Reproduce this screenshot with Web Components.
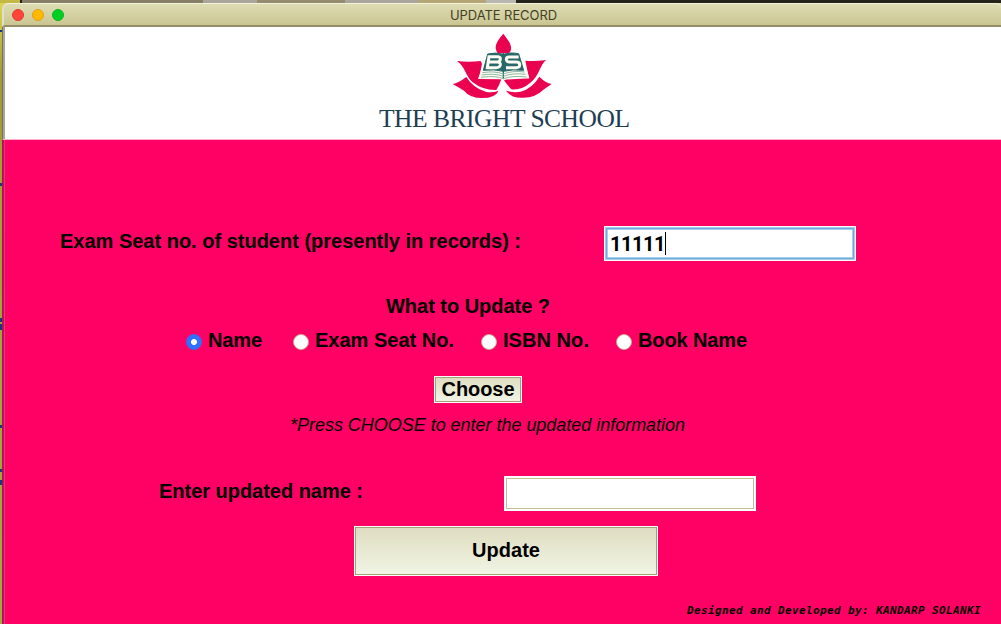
<!DOCTYPE html>
<html lang="en"><head><meta charset="utf-8"><title>UPDATE RECORD</title>
<style>html,body{margin:0;height:100%;overflow:hidden;font-family:"Liberation Sans",Arial,sans-serif;color:#000}</style></head>
<body><record-app></record-app>
<script>
const define = (name, html, ready) => customElements.define(name, class extends HTMLElement {
  connectedCallback() {
    if (this.shadowRoot) return;
    this.attachShadow({mode: 'open'}).innerHTML = html;
    if (ready) ready(this, this.shadowRoot);
  }
});

// Single line of text tracked to a given width
define('fit-text', `<style>:host{display:block;white-space:pre;flex:none}span{display:inline-block}</style><span><slot></slot></span>`, (el, root) => {
  const span = root.querySelector('span'), w = +el.getAttribute('w');
  span.style.letterSpacing = ((w - span.getBoundingClientRect().width) / el.textContent.length) + 'px';
});

define('title-bar', `<style>
:host{display:flex;box-sizing:border-box;height:24px;align-items:center;background:linear-gradient(#dedcb3,#cac693);border-top:1px solid #f3f3dc;border-bottom:2px solid #968e67;border-left:2px solid #e1e0cc;border-radius:6px 5px 0 0;padding-left:8px}
i{width:10px;height:10px;border-radius:50%;margin-right:8px;border:1px solid}
.r{background:#ff4539;border-color:#e5392c}.y{background:#ffb900;border-color:#e1a114}.g{background:#00cf24;border-color:#0fb521}
fit-text{margin-left:378px;font:13px/20px Inter,sans-serif;color:#453f26}
</style><i class="r"></i><i class="y"></i><i class="g"></i><fit-text w="107">UPDATE RECORD</fit-text>`);

define('school-logo', `<style>:host{display:block;width:125px;height:75px}svg{display:block}</style>
<svg width="125" height="75" viewBox="0 0 375 225">
<g fill="#ea0250">
<path d="M190 17C180 29 166 45 167 61Q168 70 174 77H206Q215 69 213 57C211 41 198 29 190 17Z"/>
<path d="M51 99Q86 103 122 99L126 107L117 153L184 154Q178 172 169 186Q129 187 97 162C78 147 75 114 51 99Z"/>
<path d="M318 96Q287 101 256 98L267 151L191 155Q202 171 214 184Q245 187 271 164C298 144 299 112 318 96Z"/>
<path d="M38 168Q55 165 79 147Q100 181 137 191Q154 196 176 188Q166 210 127 210Q89 210 72 188Q58 179 38 168Z"/>
<path d="M335 168Q317 165 298 146Q277 181 242 191Q223 195 198 188Q216 212 250 209Q286 209 310 185Z"/>
</g>
<path d="M130 107L114 153L160 151Q179 150 190 158Q202 149 221 150L268 151L253 99L240 98L232 76H146L136 97Z" fill="#fffef1"/>
<path d="M143 78L130 127Q162 123 190 130Q218 123 251 127L236 77Q207 72 190 79Q168 72 143 78Z" fill="#28676a" stroke="#28676a" stroke-width="3"/>
<path d="M190 75V152" fill="none" stroke="#26676a" stroke-width="4"/>
<path d="M127 134Q164 128 190 138Q218 127 254 132M125 141Q164 135 190 145Q218 134 257 139M123 148Q168 142 190 152Q218 142 260 147" fill="none" stroke="#8db4a6" stroke-width="3"/>
<path d="M147 86H174Q182 87 181 94Q180 101 173 102Q182 103 181 111Q179 119 169 119H142Z M147 102H173" fill="none" stroke="#fffdf3" stroke-width="9"/>
<path d="M236 87H208Q198 87 199 95Q200 102 209 102H228Q239 102 239 110Q240 119 228 119H198" fill="none" stroke="#fffdf3" stroke-width="9"/>
</svg>`);

define('school-header', `<style>:host{display:flex;box-sizing:border-box;height:112px;background:#fff;border-left:2px solid #aaa59b;padding:1px 0 0 374px;flex-direction:column}
school-logo{margin-left:61px}
fit-text{font:25.5px/30px "Liberation Serif",serif;color:#1d3e53;margin-top:1px}</style>
<school-logo></school-logo><fit-text w="250.5">THE BRIGHT SCHOOL</fit-text>`);

define('text-field', `<style>:host{display:block;box-sizing:border-box;width:252px;height:35px;background:#fff;padding:2px;flex:none}
div{box-sizing:border-box;height:31px;border:1px solid #c5bd98;display:flex;align-items:center}
:host([focused]) div{border:1px solid #72a7db;box-shadow:inset 0 0 0 1px #a9cdf1,0 0 0 1px #a9cdf1;padding-left:3px}
i{display:none;width:1px;height:23px;background:#000}:host([focused]) i{display:block}</style><div><slot></slot><i></i></div>`);

define('radio-option', `<style>:host{display:flex;align-items:center;height:24px}
i{box-sizing:border-box;width:16px;height:16px;border-radius:50%;background:#fff;border:1px solid #c6a696;margin:3px 6px 0 0}
:host([checked]) i{background:radial-gradient(circle,#fff 0 2.6px,#306fff 3.3px);border-color:#3c69ed}
</style><i></i><slot></slot>`);

define('push-button', `<style>:host{display:flex;box-sizing:border-box;border:1px solid #fff;flex:none}
div{flex:1;display:flex;align-items:center;justify-content:center;border:1px solid #aaa078;padding-bottom:2px;background:linear-gradient(#dfddc1,#e7e8d1 45%,#f1f4e5)}</style><div><slot></slot></div>`);

define('record-form', `<style>
:host{display:flex;flex-direction:column;align-items:flex-start;height:486px;box-sizing:border-box;background:linear-gradient(90deg,#c90c5c 1px,#f0307a 1px 2px,#ff0064 2px);border-left:1px solid #a01855;border-top:1px solid #ffb2c9;padding-top:86px;font-weight:bold;font-size:20px;line-height:24px}
.row{display:flex;height:35px}.row>fit-text{margin-top:3px}
.value{font-family:Roboto,sans-serif}
.heading{margin:33px 0 0 383px}.radios{display:flex;margin:10px 0 0 183px}
.choose{width:88px;height:27px;margin:24px 0 0 431px}
.note{font:italic 18px/24px "Liberation Sans",sans-serif;margin:10px 0 0 287px}
.second{margin-top:39px}.update{width:304px;height:50px;margin:15px 0 0 351px}
.credit{font:italic bold 11px/20px "DejaVu Sans Mono",monospace;margin:25px 0 0 684px}
</style>
<div class="row"><fit-text w="461" style="margin-left:57px">Exam Seat no. of student (presently in records) :</fit-text><text-field focused style="margin-left:83px"><fit-text class="value" w="55">11111</fit-text></text-field></div>
<fit-text class="heading" w="164">What to Update ?</fit-text>
<div class="radios">
<radio-option checked style="width:107px"><fit-text w="54">Name</fit-text></radio-option>
<radio-option style="width:188px"><fit-text w="139">Exam Seat No.</fit-text></radio-option>
<radio-option style="width:135px"><fit-text w="86">ISBN No.</fit-text></radio-option>
<radio-option><fit-text w="109">Book Name</fit-text></radio-option></div>
<push-button class="choose"><fit-text w="73">Choose</fit-text></push-button>
<fit-text class="note" w="395">*Press CHOOSE to enter the updated information</fit-text>
<div class="row second"><fit-text w="204" style="margin-left:156px">Enter updated name :</fit-text><text-field style="margin-left:141px"></text-field></div>
<push-button class="update"><fit-text w="68">Update</fit-text></push-button>
<fit-text class="credit" w="294">Designed and Developed by: KANDARP SOLANKI</fit-text>`);

// Slice of the desktop visible above and left of the window
define('record-app', `<style>
:host{display:grid;grid-template:3px 621px / 2px 999px;height:624px;overflow:hidden;background:#a9a545}
.top{grid-column:1/3;background:linear-gradient(90deg,#c4b944 0 20px,#252219 20px 22px,#877f65 22px 203px,#aaa69c 203px 257px,#958c70 257px 345px,#aaa69e 345px 418px,#b5a675 418px 486px,#b9b7b1 486px 516px,#252219 516px)}
.left{background:linear-gradient(#ded64e,#a59c34 70px,#a9a545);display:flex;flex-direction:column}
.left i{width:2px;background:#123c78;flex:none}
.window{display:block;background:linear-gradient(90deg,#d6d05c 4px,#dddbb0 8px)}
.head{padding-left:1px;background:#77715e}
</style><div class="top"></div>
<div class="left"><i style="height:2px;margin-top:27px"></i><i style="height:3px;margin-top:151px"></i><i style="height:4px;margin-top:132px"></i><i style="height:6px;margin-top:2px"></i><i style="height:3px;margin-top:95px"></i><i style="height:3px;margin-top:41px"></i><i style="height:5px;margin-top:8px"></i></div>
<div class="window"><title-bar></title-bar><div class="head"><school-header></school-header></div><record-form></record-form></div>`);
</script></body></html>
